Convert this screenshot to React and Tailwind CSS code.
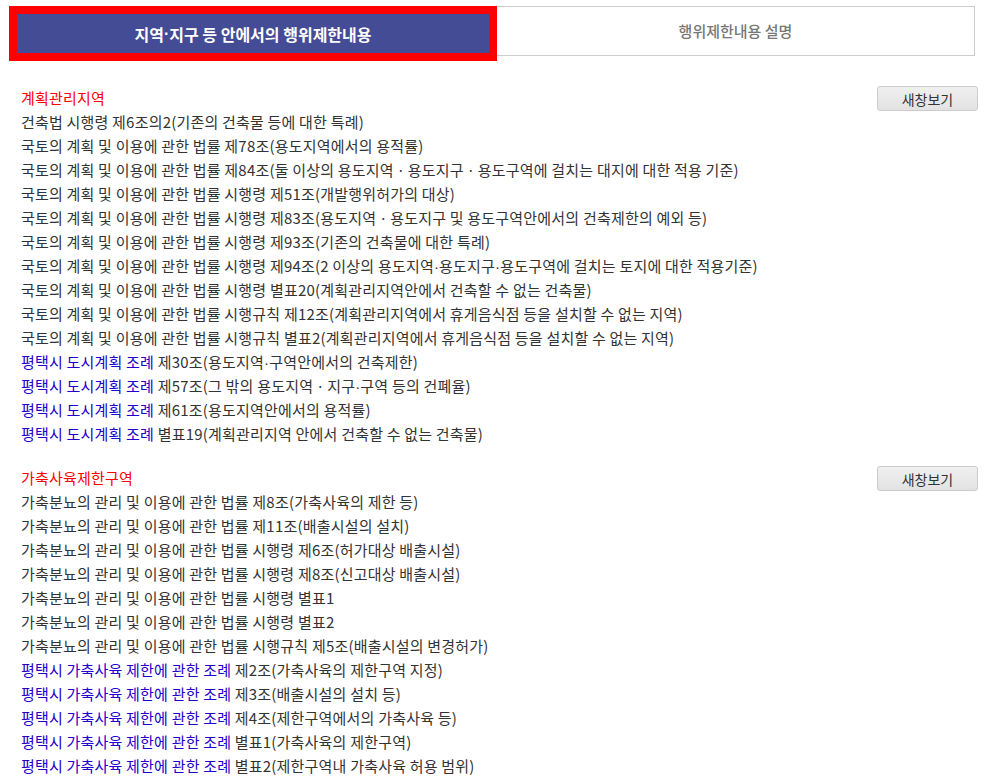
import React from "react";

const sections = [
	{
		title: "계획관리지역",
		items: [
			["", "건축법 시행령 제6조의2(기존의 건축물 등에 대한 특례)"],
			["", "국토의 계획 및 이용에 관한 법률 제78조(용도지역에서의 용적률)"],
			["", "국토의 계획 및 이용에 관한 법률 제84조(둘 이상의 용도지역ㆍ용도지구ㆍ용도구역에 걸치는 대지에 대한 적용 기준)"],
			["", "국토의 계획 및 이용에 관한 법률 시행령 제51조(개발행위허가의 대상)"],
			["", "국토의 계획 및 이용에 관한 법률 시행령 제83조(용도지역ㆍ용도지구 및 용도구역안에서의 건축제한의 예외 등)"],
			["", "국토의 계획 및 이용에 관한 법률 시행령 제93조(기존의 건축물에 대한 특례)"],
			["", "국토의 계획 및 이용에 관한 법률 시행령 제94조(2 이상의 용도지역·용도지구·용도구역에 걸치는 토지에 대한 적용기준)"],
			["", "국토의 계획 및 이용에 관한 법률 시행령 별표20(계획관리지역안에서 건축할 수 없는 건축물)"],
			["", "국토의 계획 및 이용에 관한 법률 시행규칙 제12조(계획관리지역에서 휴게음식점 등을 설치할 수 없는 지역)"],
			["", "국토의 계획 및 이용에 관한 법률 시행규칙 별표2(계획관리지역에서 휴게음식점 등을 설치할 수 없는 지역)"],
			["평택시 도시계획 조례", " 제30조(용도지역·구역안에서의 건축제한)"],
			["평택시 도시계획 조례", " 제57조(그 밖의 용도지역ㆍ지구·구역 등의 건폐율)"],
			["평택시 도시계획 조례", " 제61조(용도지역안에서의 용적률)"],
			["평택시 도시계획 조례", " 별표19(계획관리지역 안에서 건축할 수 없는 건축물)"],
		],
	},
	{
		title: "가축사육제한구역",
		items: [
			["", "가축분뇨의 관리 및 이용에 관한 법률 제8조(가축사육의 제한 등)"],
			["", "가축분뇨의 관리 및 이용에 관한 법률 제11조(배출시설의 설치)"],
			["", "가축분뇨의 관리 및 이용에 관한 법률 시행령 제6조(허가대상 배출시설)"],
			["", "가축분뇨의 관리 및 이용에 관한 법률 시행령 제8조(신고대상 배출시설)"],
			["", "가축분뇨의 관리 및 이용에 관한 법률 시행령 별표1"],
			["", "가축분뇨의 관리 및 이용에 관한 법률 시행령 별표2"],
			["", "가축분뇨의 관리 및 이용에 관한 법률 시행규칙 제5조(배출시설의 변경허가)"],
			["평택시 가축사육 제한에 관한 조례", " 제2조(가축사육의 제한구역 지정)"],
			["평택시 가축사육 제한에 관한 조례", " 제3조(배출시설의 설치 등)"],
			["평택시 가축사육 제한에 관한 조례", " 제4조(제한구역에서의 가축사육 등)"],
			["평택시 가축사육 제한에 관한 조례", " 별표1(가축사육의 제한구역)"],
			["평택시 가축사육 제한에 관한 조례", " 별표2(제한구역내 가축사육 허용 범위)"],
		],
	},
];

// narrow middle dot like the original page font
const Dots = ({ text }) =>
	text.split("·").map((part, i) => (
		<React.Fragment key={i}>
			{i > 0 && (
				<span className="leading-none" style={{ fontFamily: '"Liberation Sans", sans-serif' }}>
					·
				</span>
			)}
			{part}
		</React.Fragment>
	));

const Section = ({ title, items }) => (
	<div className="pl-[21px] pr-[25px]">
		<div className="flex items-start justify-between h-6">
			<span className="text-[#ff0000] leading-6">{title}</span>
			<button
				type="button"
				className="w-[101px] h-[25px] rounded-[3px] border border-[#cccccc] bg-gradient-to-b from-[#f0f0f0] to-[#e2e2e2] text-[14px] text-[#333] leading-none tracking-normal"
			>
				새창보기
			</button>
		</div>
		<ul>
			{items.map(([link, rest], i) => (
				<li key={i} className="h-6 leading-6 text-[#333]">
					{link && <span className="text-[#2200cc]">{link}</span>}
					<Dots text={rest} />
				</li>
			))}
		</ul>
	</div>
);

export default function App() {
	return (
		<div
			className="min-h-screen bg-white text-[15px] tracking-[0.2px]"
			style={{ fontFamily: '"Noto Sans CJK KR", "Noto Sans", sans-serif' }}
		>
			<div className="flex items-start pt-[6px] pl-[9px]">
				<div className="w-[488px] h-[55px] border-8 border-[#ff0000] bg-[#434c94] flex items-center justify-center text-white font-bold text-[16px] tracking-normal">
					<Dots text="지역·지구 등 안에서의 행위제한내용" />
				</div>
				<div className="w-[478px] h-[50px] border border-l-0 border-[#cccccc] flex items-center justify-center text-[#777] text-[15px] font-medium tracking-normal">
					행위제한내용 설명
				</div>
			</div>
			<div className="mt-[25px] flex flex-col gap-5">
				{sections.map((s) => (
					<Section key={s.title} {...s} />
				))}
			</div>
		</div>
	);
}
